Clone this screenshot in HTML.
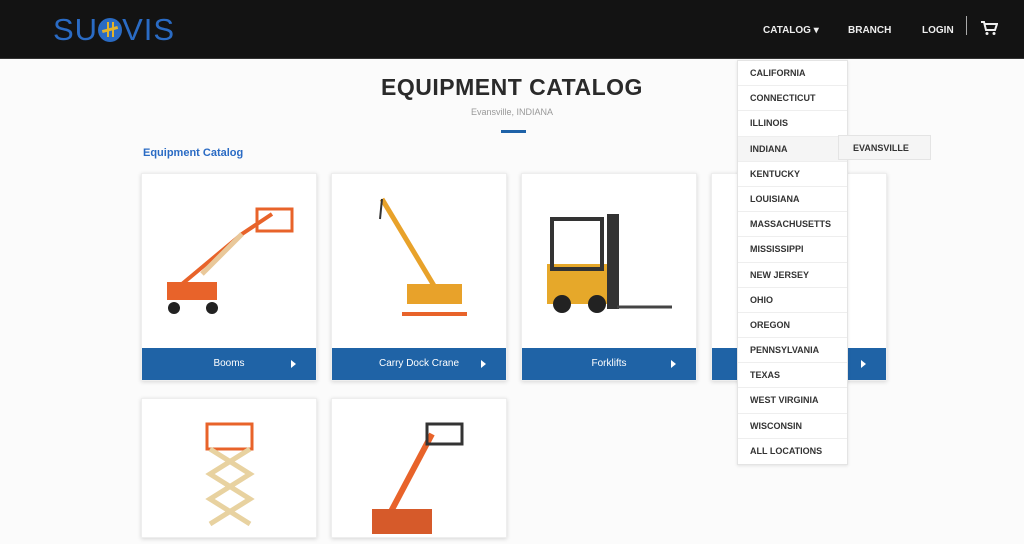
<!DOCTYPE html>
<html><head><meta charset="utf-8"><style>
*{margin:0;padding:0;box-sizing:border-box}
body{width:1024px;height:535px;overflow:hidden;background:#fbfbfb;font-family:"Liberation Sans",sans-serif;position:relative}
.hdr{position:absolute;left:0;top:0;width:1024px;height:59px;background:#131313;border-bottom:1px solid #333}
.logo{position:absolute;left:53px;top:12px;font-size:31px;color:#2a6bc4;letter-spacing:1px;font-weight:400}
.nav{position:absolute;top:25px;color:#eee;font-size:10px;font-weight:bold}
h1{position:absolute;left:0;width:1024px;top:74px;text-align:center;font-size:23px;font-weight:bold;color:#2a2a2a;letter-spacing:.5px}
.sub{position:absolute;width:1024px;top:107px;text-align:center;font-size:9px;color:#999}
.bar{position:absolute;left:501px;top:130px;width:25px;height:3px;background:#1e62a8}
.bc{position:absolute;left:143px;top:147px;font-size:11px;color:#2a6bc4;font-weight:bold}
.card{position:absolute;width:176px;background:#fff;box-shadow:0 1px 4px rgba(0,0,0,.15);border:1px solid #eee}
.btn{position:absolute;left:0;bottom:0;width:100%;height:32px;background:#1f63a6;color:#fff;font-size:10px;text-align:center;line-height:32px}
.btn:after{content:"";position:absolute;right:20px;top:12px;border-left:5px solid #fff;border-top:4px solid transparent;border-bottom:4px solid transparent}
.dd{position:absolute;left:737px;top:60px;width:111px;background:#fff;border:1px solid #e4e4e4;box-shadow:0 1px 3px rgba(0,0,0,.1)}
.dd div{height:25.2px;line-height:25px;padding-left:12px;font-size:9px;font-weight:bold;color:#333;border-bottom:1px solid #eee}
.ev{position:absolute;left:838px;top:135px;width:93px;height:25px;line-height:25px;padding-left:14px;background:#f5f5f5;border:1px solid #e4e4e4;font-size:9px;font-weight:bold;color:#333}
</style></head><body>
<div class="hdr">
<div class="logo">SU<span style="display:inline-block;width:24px;height:24px;border-radius:50%;background:#2a6bc4;vertical-align:-2px;position:relative"><span style="position:absolute;left:4px;top:10px;width:16px;height:3px;background:#e3b32a;transform:rotate(-15deg)"></span><span style="position:absolute;left:9px;top:4px;width:2px;height:15px;background:#e3b32a"></span><span style="position:absolute;left:14px;top:4px;width:2px;height:15px;background:#e3b32a"></span></span>VIS</div>
<div class="nav" style="left:763px">CATALOG ▾</div>
<div class="nav" style="left:848px">BRANCH</div>
<div class="nav" style="left:922px">LOGIN</div>
<div style="position:absolute;left:966px;top:16px;width:1px;height:19px;background:#aaa"></div>
<svg style="position:absolute;left:980px;top:20px" width="18" height="16" viewBox="0 0 18 16"><path d="M1 2h3l2 8h9l2-6H5" fill="none" stroke="#eee" stroke-width="2"/><circle cx="7" cy="13.5" r="1.5" fill="#eee"/><circle cx="14" cy="13.5" r="1.5" fill="#eee"/></svg>
</div>
<h1>EQUIPMENT CATALOG</h1>
<div class="sub">Evansville, INDIANA</div>
<div class="bar"></div>
<div class="bc">Equipment Catalog</div>

<div class="card" style="left:141px;top:173px;height:208px">
<svg width="176" height="176"><g stroke="#e8632a" stroke-width="4" fill="none"><path d="M40 110 L100 60 L130 40"/></g><path d="M60 100 L100 60" stroke="#e9c89a" stroke-width="5"/><rect x="115" y="35" width="35" height="22" fill="none" stroke="#e8632a" stroke-width="3"/><rect x="25" y="108" width="50" height="18" fill="#e8632a"/><circle cx="32" cy="134" r="6" fill="#222"/><circle cx="70" cy="134" r="6" fill="#222"/></svg>
<div class="btn">Booms</div></div>
<div class="card" style="left:331px;top:173px;height:208px">
<svg width="176" height="176"><path d="M50 25 L110 125" stroke="#e8a22a" stroke-width="5"/><path d="M50 25 L48 45" stroke="#333" stroke-width="2"/><rect x="75" y="110" width="55" height="20" fill="#e8a22a"/><path d="M70 140h65" stroke="#e8632a" stroke-width="4"/></svg>
<div class="btn">Carry Dock Crane</div></div>
<div class="card" style="left:521px;top:173px;height:208px">
<svg width="176" height="176"><rect x="25" y="90" width="60" height="40" fill="#e6a82a"/><rect x="30" y="45" width="50" height="50" fill="none" stroke="#333" stroke-width="4"/><rect x="85" y="40" width="12" height="95" fill="#333"/><path d="M95 133h55" stroke="#444" stroke-width="3"/><circle cx="40" cy="130" r="9" fill="#222"/><circle cx="75" cy="130" r="9" fill="#222"/></svg>
<div class="btn">Forklifts</div></div>
<div class="card" style="left:711px;top:173px;height:208px"><div class="btn"></div></div>
<div class="card" style="left:141px;top:398px;height:140px">
<svg width="176" height="140"><rect x="65" y="25" width="45" height="25" fill="none" stroke="#e8632a" stroke-width="3"/><path d="M68 50 L108 75 L68 100 L108 125 M108 50 L68 75 L108 100 L68 125" stroke="#e8d2a0" stroke-width="5" fill="none"/></svg></div>
<div class="card" style="left:331px;top:398px;height:140px">
<svg width="176" height="140"><path d="M55 120 L100 35" stroke="#e8632a" stroke-width="6"/><rect x="95" y="25" width="35" height="20" fill="none" stroke="#333" stroke-width="3"/><rect x="40" y="110" width="60" height="25" fill="#d65a2a"/></svg></div>

<div class="dd">
<div>CALIFORNIA</div><div>CONNECTICUT</div><div>ILLINOIS</div><div style="background:#f5f5f5">INDIANA</div><div>KENTUCKY</div><div>LOUISIANA</div><div>MASSACHUSETTS</div><div>MISSISSIPPI</div><div>NEW JERSEY</div><div>OHIO</div><div>OREGON</div><div>PENNSYLVANIA</div><div>TEXAS</div><div>WEST VIRGINIA</div><div>WISCONSIN</div><div style="border:0">ALL LOCATIONS</div>
</div>
<div class="ev">EVANSVILLE</div>
</body></html>
